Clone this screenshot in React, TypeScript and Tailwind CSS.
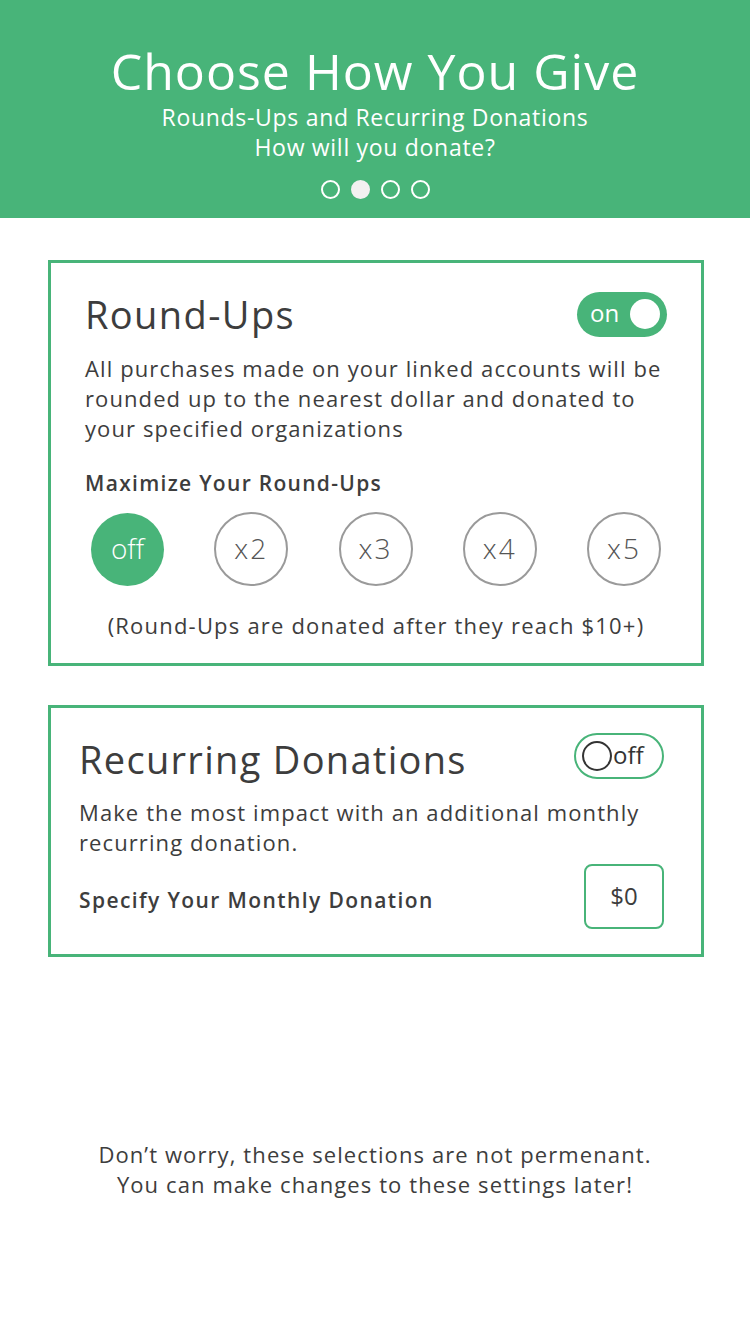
import React from "react";

const font = { fontFamily: "'Open Sans', 'Noto Sans', sans-serif" };

function Dots() {
  return (
    <div className="mt-[18px] flex items-center justify-center gap-[11px]">
      {[0, 1, 2, 3].map((i) => (
        <span
          key={i}
          className={
            i === 1
              ? "h-[19px] w-[19px] rounded-full border-2 border-[#f3f1f1] bg-[#f3f1f1]"
              : "h-[19px] w-[19px] rounded-full border-2 border-white"
          }
        />
      ))}
    </div>
  );
}

function Multiplier({ label, active }: { label: string; active?: boolean }) {
  return (
    <div
      className={
        active
          ? "flex h-[73px] w-[73px] items-center justify-center rounded-full bg-[#48b479] pb-[2px] text-[28px] font-light text-white"
          : "flex h-[74px] w-[74px] items-center justify-center rounded-full border-2 border-[#9a9a9a] pb-[2px] text-[28px] font-light tracking-[2px] text-[#555]"
      }
    >
      {label}
    </div>
  );
}

export default function App() {
  return (
    <div className="min-h-[1334px] w-[750px] bg-white text-[#3d3d3d]" style={font}>
      <header className="flex h-[218px] flex-col items-center bg-[#48b479] pt-[43px] text-white">
        <h1 className="text-[50px] leading-[56px] tracking-[1px]">Choose How You Give</h1>
        <p className="mt-[3px] text-[23px] leading-[30px] tracking-[0.7px]">Rounds-Ups and Recurring Donations</p>
        <p className="text-[23px] leading-[30px] tracking-[0.7px]">How will you donate?</p>
        <Dots />
      </header>

      <main className="flex flex-col gap-[39px] pl-[48px] pr-[46px] pt-[42px]">
        <section className="border-[3px] border-[#48b479] px-[34px] pb-[23px] pt-[27px]">
          <div className="flex items-center justify-between">
            <h2 className="text-[38px] leading-[48px] tracking-[1.4px]">Round-Ups</h2>
            <div className="flex h-[45px] w-[90px] items-center justify-between rounded-full bg-[#48b479] pb-[2px] pl-[13px] pr-[7px] text-[24px] text-white">
              <span>on</span>
              <span className="mt-[2px] h-[30px] w-[30px] rounded-full bg-white" />
            </div>
          </div>
          <p className="mt-[15px] text-[22px] leading-[30px] tracking-[1.1px]">
            All purchases made on your linked accounts will be rounded up to the nearest dollar and donated to your
            specified organizations
          </p>
          <p className="mt-[26px] text-[21px] font-semibold leading-[28px] tracking-[1.3px]">Maximize Your Round-Ups</p>
          <div className="mt-[15px] flex items-center justify-between px-[6px]">
            <Multiplier label="off" active />
            <Multiplier label="x2" />
            <Multiplier label="x3" />
            <Multiplier label="x4" />
            <Multiplier label="x5" />
          </div>
          <p className="mt-[24px] text-center text-[22px] leading-[30px] tracking-[1.2px]">
            (Round-Ups are donated after they reach $10+)
          </p>
        </section>

        <section className="border-[3px] border-[#48b479] pb-[25px] pl-[28px] pr-[37px] pt-[25px]">
          <div className="flex items-start justify-between">
            <h2 className="mt-[2px] text-[38px] leading-[48px] tracking-[1.3px]">Recurring Donations</h2>
            <div className="flex h-[46px] w-[90px] items-center gap-[1px] rounded-full border-2 border-[#48b479] pb-[2px] pl-[6px] text-[24px] text-[#333]">
              <span className="mt-[2px] h-[30px] w-[30px] rounded-full border-2 border-[#333]" />
              <span>off</span>
            </div>
          </div>
          <p className="mt-[14px] text-[22px] leading-[30px] tracking-[1.1px]">
            Make the most impact with an additional monthly recurring donation.
          </p>
          <div className="mt-[7px] flex items-center justify-between">
            <p className="mt-[8px] text-[21px] font-semibold tracking-[1.4px]">Specify Your Monthly Donation</p>
            <div className="flex h-[65px] w-[80px] items-center justify-center rounded-[8px] border-2 border-[#48b479] pb-[2px] text-[24px]">
              $0
            </div>
          </div>
        </section>
      </main>

      <footer className="mt-[182px] text-center text-[22px] leading-[30px] tracking-[1.1px]">
        <p>Don’t worry, these selections are not permenant.</p>
        <p>You can make changes to these settings later!</p>
      </footer>
    </div>
  );
}
